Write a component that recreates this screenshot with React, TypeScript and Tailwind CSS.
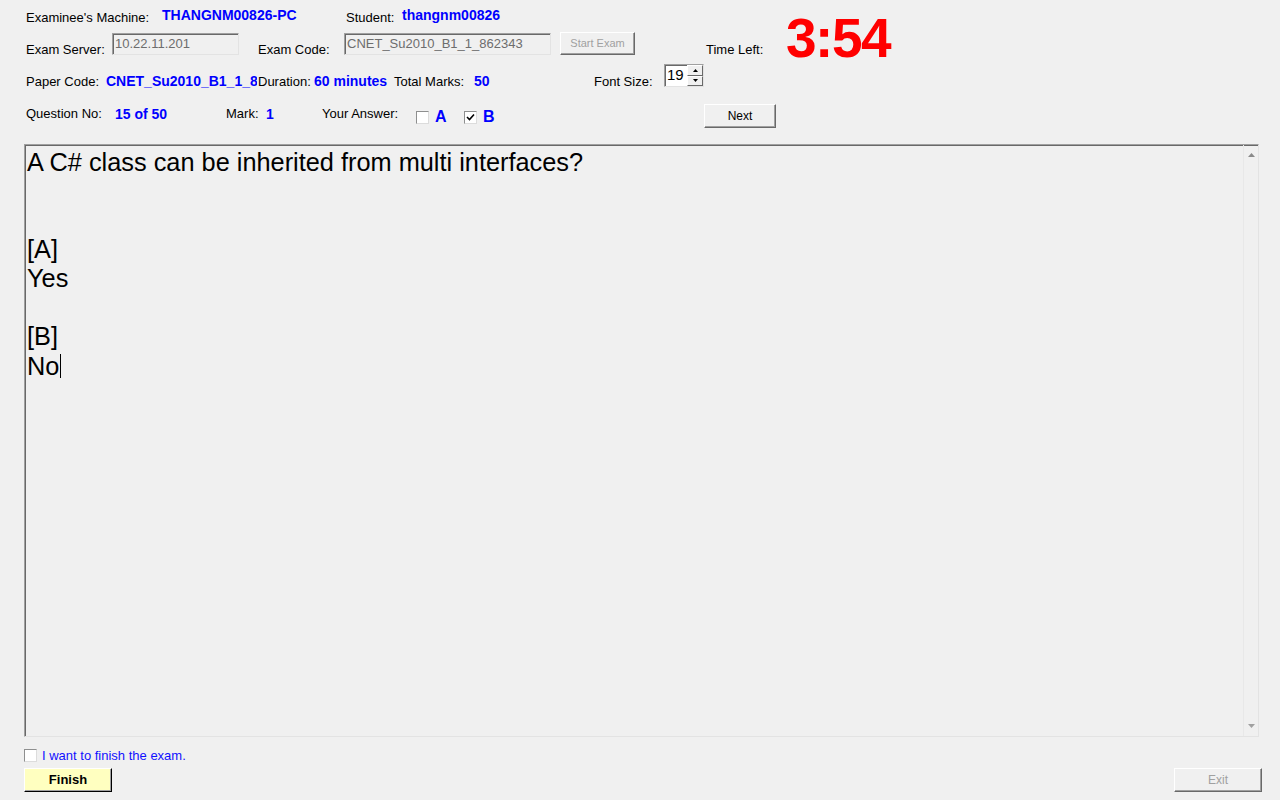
import React from "react";

const font = { fontFamily: '"Liberation Sans", Arial, sans-serif' };

const Check = ({ checked }: { checked?: boolean }) => (
  <span className="inline-flex h-[13px] w-[13px] shrink-0 items-center justify-center border border-t-[#8e8f8f] border-l-[#8e8f8f] border-b-[#dcdcdc] border-r-[#dcdcdc] bg-white">
    {checked && (
      <svg width="9" height="9" viewBox="0 0 9 9">
        <path d="M1 4 L3.5 6.5 L8 1.5" stroke="#000" strokeWidth="1.6" fill="none" />
      </svg>
    )}
  </span>
);

const Button = ({
  children,
  disabled,
  className = "",
}: {
  children: React.ReactNode;
  disabled?: boolean;
  className?: string;
}) => (
  <button
    className={`flex items-center justify-center border border-t-white border-l-white border-b-[#696969] border-r-[#696969] shadow-[inset_-1px_-1px_0_#a0a0a0] ${
      disabled ? "text-[#a0a0a0]" : "text-black"
    } ${className}`}
  >
    {children}
  </button>
);

const ReadOnlyBox = ({ value, className = "" }: { value: string; className?: string }) => (
  <div
    className={`flex h-[22px] items-center border border-t-[#a0a0a0] border-l-[#a0a0a0] border-b-[#e3e3e3] border-r-[#e3e3e3] bg-[#f0f0f0] pl-[2px] text-[13px] text-[#6d6d6d] shadow-[inset_1px_1px_0_#696969] ${className}`}
  >
    {value}
  </div>
);

export default function App() {
  return (
    <div className="flex h-[800px] w-[1280px] flex-col overflow-hidden bg-[#f0f0f0] text-black" style={font}>
      {/* header */}
      <div className="flex h-[144px] flex-col">
        <div className="flex h-[57px]">
          <div className="flex w-[786px] flex-col">
            {/* row 1 */}
            <div className="flex h-[32px] items-start pt-[8px] pl-[26px] text-[13px]">
              <span className="w-[136px]">Examinee's Machine:</span>
              <span className="w-[184px] text-[14px] font-bold leading-[15px] text-[#0000ff]">THANGNM00826-PC</span>
              <span className="w-[56px]">Student:</span>
              <span className="text-[14px] font-bold leading-[15px] text-[#0000ff]">thangnm00826</span>
            </div>
            {/* row 2 */}
            <div className="flex h-[25px] items-start pl-[26px] text-[13px]">
              <span className="mt-[8px] w-[86px]">Exam Server:</span>
              <ReadOnlyBox value="10.22.11.201" className="mt-[1px] w-[127px]" />
              <span className="ml-[19px] mt-[8px] w-[86px]">Exam Code:</span>
              <ReadOnlyBox value="CNET_Su2010_B1_1_862343" className="mt-[1px] w-[207px]" />
              <Button disabled className="ml-[9px] h-[23px] w-[75px] text-[11px]">
                Start Exam
              </Button>
              <span className="ml-[71px] mt-[8px]">Time Left:</span>
            </div>
          </div>
          <div className="h-[57px] pt-[6px] text-[55px] font-bold leading-[64px] tracking-[-1.5px] text-[#ff0000]">3:54</div>
        </div>
        {/* row 3 */}
        <div className="flex h-[47px] items-start pl-[26px] text-[13px]">
          <span className="mt-[15px] w-[80px]">Paper Code:</span>
          <span className="mt-[14px] w-[151px] overflow-hidden whitespace-nowrap text-[14px] font-bold text-[#0000ff]">
            CNET_Su2010_B1_1_862343
          </span>
          <span className="ml-[1px] mt-[15px] w-[56px]">Duration:</span>
          <span className="mt-[14px] w-[80px] text-[14px] font-bold text-[#0000ff]">60 minutes</span>
          <span className="mt-[15px] w-[80px]">Total Marks:</span>
          <span className="mt-[14px] w-[120px] text-[14px] font-bold text-[#0000ff]">50</span>
          <span className="mt-[15px] w-[70px]">Font Size:</span>
          <div className="mt-[7px] flex h-[23px] w-[40px] border border-t-[#a0a0a0] border-l-[#a0a0a0] border-b-[#e3e3e3] border-r-[#e3e3e3] bg-white shadow-[inset_1px_1px_0_#696969]">
            <span className="flex-1 pl-[2px] pt-[1px] text-[15px] leading-[18px]">19</span>
            <div className="flex w-[16px] flex-col">
              <div className="flex flex-1 items-center justify-center border border-t-white border-l-white border-b-[#696969] border-r-[#696969] bg-[#f0f0f0]">
                <svg width="5" height="3" viewBox="0 0 5 3">
                  <path d="M2.5 0 L5 3 L0 3 Z" fill="#000" />
                </svg>
              </div>
              <div className="flex flex-1 items-center justify-center border border-t-white border-l-white border-b-[#696969] border-r-[#696969] bg-[#f0f0f0]">
                <svg width="5" height="3" viewBox="0 0 5 3">
                  <path d="M0 0 L5 0 L2.5 3 Z" fill="#000" />
                </svg>
              </div>
            </div>
          </div>
        </div>
        {/* row 4 */}
        <div className="flex h-[40px] items-start pl-[26px] text-[13px]">
          <span className="w-[89px]">Question No:</span>
          <span className="w-[111px] text-[14px] font-bold text-[#0000ff]">15 of 50</span>
          <span className="w-[40px]">Mark:</span>
          <span className="w-[56px] text-[14px] font-bold text-[#0000ff]">1</span>
          <span className="w-[94px]">Your Answer:</span>
          <div className="mt-[6px] flex w-[48px] items-center">
            <Check />
            <span className="ml-[6px] text-[16px] font-bold leading-[14px] text-[#0000ff]">A</span>
          </div>
          <div className="mt-[6px] flex w-[48px] items-center">
            <Check checked />
            <span className="ml-[6px] text-[16px] font-bold leading-[14px] text-[#0000ff]">B</span>
          </div>
          <Button className="ml-[192px] h-[24px] w-[72px] text-[12px]">Next</Button>
        </div>
      </div>

      {/* question box */}
      <div className="mx-[24px] flex h-[593px] w-[1235px] border border-t-[#a0a0a0] border-l-[#a0a0a0] border-b-[#e3e3e3] border-r-[#e3e3e3] bg-[#f0f0f0] shadow-[inset_1px_1px_0_#696969]">
        <div className="flex-1 whitespace-pre pl-[2px] pt-[3px] text-[25.33px] leading-[29px] text-black">
          {"A C# class can be inherited from multi interfaces?\n\n\n[A]\nYes\n\n[B]\nNo"}
          <span className="ml-[1px] inline-block h-[24px] w-[1px] translate-y-[3px] bg-black" />
        </div>
        <div className="flex w-[15px] flex-col items-center justify-between border-l border-l-[#e8e8e8] py-[8px]">
          <svg width="7" height="4" viewBox="0 0 7 4">
            <path d="M3.5 0 L7 4 L0 4 Z" fill="#8a8a8a" />
          </svg>
          <svg width="7" height="4" viewBox="0 0 7 4">
            <path d="M0 0 L7 0 L3.5 4 Z" fill="#a0a0a0" />
          </svg>
        </div>
      </div>

      {/* footer */}
      <div className="mt-[9px] flex items-center pl-[24px] text-[13px]">
        <Check />
        <span className="ml-[5px] text-[#1010ff]">I want to finish the exam.</span>
      </div>
      <div className="mt-[2px] flex items-start justify-between pl-[24px] pr-[18px]">
        <button className="flex h-[24px] w-[88px] items-center justify-center border border-t-white border-l-white border-b-black border-r-black bg-[#ffffc0] shadow-[inset_-1px_-1px_0_#a0a0a0] text-[13px] font-bold">
          Finish
        </button>
        <Button disabled className="h-[24px] w-[88px] text-[12px]">
          Exit
        </Button>
      </div>
    </div>
  );
}
